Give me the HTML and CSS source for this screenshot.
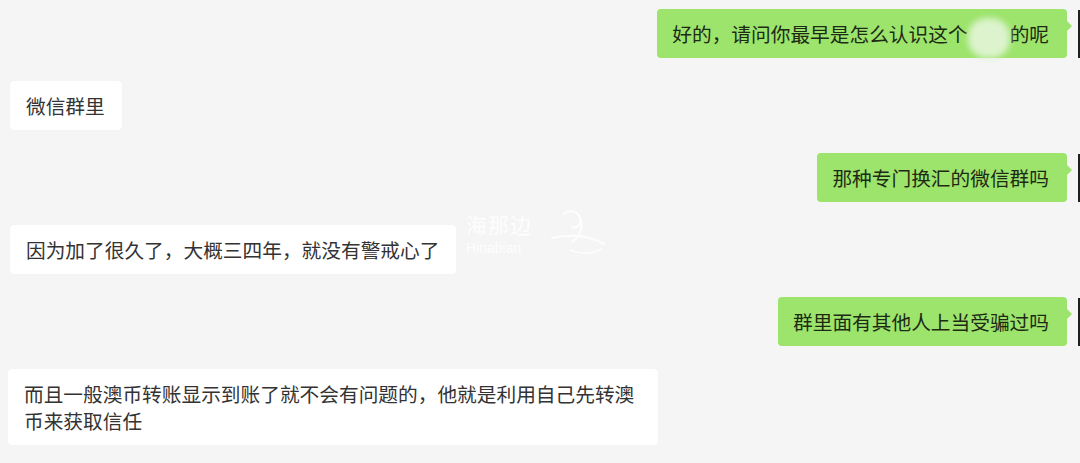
FILE: index.html
```html
<!DOCTYPE html>
<html lang="zh-CN">
<head>
    <meta charset="UTF-8">
    <meta name="viewport" content="width=device-width, initial-scale=1.0">
    <title>聊天记录</title>
    <link rel="stylesheet" href="styles.css">
</head>
<body>
    <div class="chat">
        <div class="msg right">
            <div class="bubble green">好的，请问你最早是怎么认识这个<span class="masked"></span>的呢</div>
            <div class="avatar"></div>
        </div>
        <div class="msg left">
            <div class="bubble white">微信群里</div>
        </div>
        <div class="msg right">
            <div class="bubble green">那种专门换汇的微信群吗</div>
            <div class="avatar"></div>
        </div>
        <div class="msg left">
            <div class="bubble white">因为加了很久了，大概三四年，就没有警戒心了</div>
        </div>
        <div class="msg right">
            <div class="bubble green">群里面有其他人上当受骗过吗</div>
            <div class="avatar"></div>
        </div>
        <div class="msg left long">
            <div class="bubble white">而且一般澳币转账显示到账了就不会有问题的，他就是利用自己先转澳币来获取信任</div>
        </div>
    </div>

    <!-- watermark -->
    <div class="watermark">
        <div class="wm-text">
            <div class="wm-cn">海那边</div>
            <div class="wm-en">Hinabian</div>
        </div>
        <svg class="wm-logo" width="60" height="52" viewBox="0 0 60 52">
            <path d="M16 8 C22 3 30 5 32 12 C34 19 28 23 24 21" fill="none" stroke="#fff" stroke-width="2.2" stroke-linecap="round"/>
            <path d="M32 12 C36 21 32 31 24 36" fill="none" stroke="#fff" stroke-width="2" stroke-linecap="round"/>
            <path d="M4 32 C18 29 36 27 56 38" fill="none" stroke="#fff" stroke-width="2" stroke-linecap="round"/>
            <path d="M22 44 C32 48 44 48 54 43" fill="none" stroke="#fff" stroke-width="1.6" stroke-linecap="round"/>
        </svg>
    </div>
</body>
</html>
```

FILE: styles.css
```css
body {
    margin: 0;
    background-color: #f5f5f5;
    font-family: "Noto Sans CJK SC", "Liberation Sans", sans-serif;
    width: 1080px;
    height: 463px;
    overflow: hidden;
    position: relative;
}
.chat {
    display: flex;
    flex-direction: column;
    gap: 23px;
    padding-top: 9px;
}
.msg {
    display: flex;
    align-items: flex-start;
}
.msg.left {
    padding-left: 10px;
}
.msg.long {
    padding-left: 8px;
}
.msg.right {
    justify-content: flex-end;
}
.bubble {
    position: relative;
    box-sizing: border-box;
    max-width: 650px;
    padding: 11px 17px 11px 16px;
    font-size: 19.7px;
    line-height: 27px;
    border-radius: 4px;
}
.bubble.green {
    background-color: #9ce46b;
    color: #1e2a14;
    padding: 11px 18px 11px 15px;
}
.bubble.green::after {
    content: "";
    position: absolute;
    right: -5px;
    top: 12px;
    border-top: 5px solid transparent;
    border-bottom: 5px solid transparent;
    border-left: 5px solid #9ce46b;
}
.bubble.white {
    background-color: #fff;
    color: #333;
    box-shadow: 0 0 1px rgba(0, 0, 0, 0.06);
}
.avatar {
    width: 2px;
    height: 48px;
    margin-top: 1px;
    margin-left: 11px;
    background-color: #1f1f1f;
}
.masked {
    display: inline-block;
    position: relative;
    width: 42px;
    height: 1em;
}
.masked::after {
    content: "";
    position: absolute;
    left: 0;
    right: 0;
    top: -4px;
    bottom: -16px;
    background-color: #dcf3cd;
    border-radius: 45%;
    filter: blur(3px);
}
.watermark {
    position: absolute;
    left: 466px;
    top: 206px;
    display: flex;
    align-items: center;
    gap: 16px;
    opacity: 0.8;
}
.wm-text {
    color: #fff;
}
.wm-cn {
    font-size: 21px;
    line-height: 32px;
    letter-spacing: 1px;
}
.wm-en {
    font-size: 14px;
    line-height: 16px;
    font-family: "Liberation Sans", sans-serif;
}
```
